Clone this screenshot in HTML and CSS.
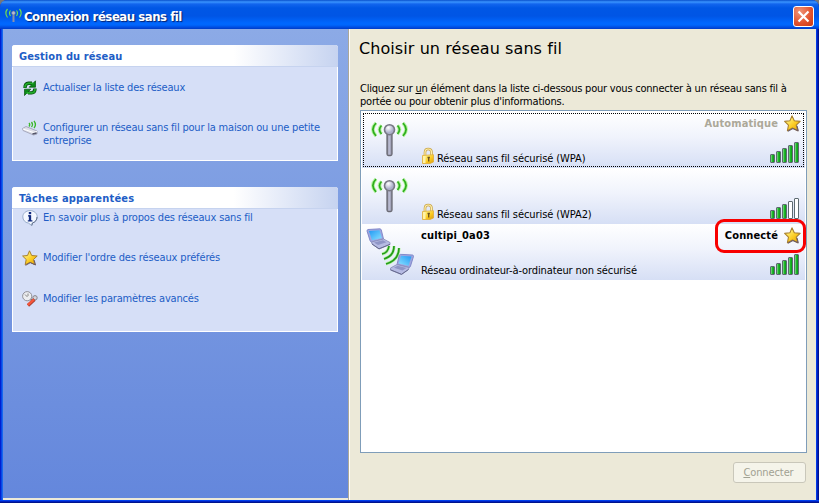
FILE: index.html
```html
<!DOCTYPE html>
<html lang="fr">
<head>
<meta charset="utf-8">
<title>Connexion réseau sans fil</title>
<link rel="stylesheet" href="styles.css">
</head>
<body>
<svg class="defs" aria-hidden="true">
  <defs>
    <linearGradient id="gold" x1="0" y1="0" x2="1" y2="1"><stop offset=".2" stop-color="#fff27a"/><stop offset=".6" stop-color="#fbc91f"/><stop offset="1" stop-color="#d99a10"/></linearGradient>
    <linearGradient id="pole" x1="0" x2="1" y1="0" y2="0"><stop offset="0" stop-color="#74747e"/><stop offset=".4" stop-color="#c0c2da"/><stop offset="1" stop-color="#8a8a9c"/></linearGradient>
    <radialGradient id="ball" cx=".38" cy=".3"><stop offset="0" stop-color="#fff"/><stop offset="1" stop-color="#adb0cb"/></radialGradient>
    <linearGradient id="screen" x1="0" y1="0" x2="1" y2="1"><stop offset="0" stop-color="#2098f5"/><stop offset="1" stop-color="#8be2ff"/></linearGradient>
    <symbol id="star" viewBox="0 0 16 16"><path d="M7.500 .8 9.700 5.500 15.200 6 11.500 9.500 13 14.800 8 12.200 3.200 14.800 4.200 9.500.6 6 5.500 5.500Z" fill="url(#gold)" stroke="#a87f2c" stroke-width="1" stroke-linejoin="round"/><path d="M13.700 15 8.300 12.700 3.600 15.300M12.200 10.200l1.300 4.800" fill="none" stroke="#6b5a65" stroke-width="1"/></symbol>
    <symbol id="lock" viewBox="0 0 14 18"><path d="M4 9V5.200Q4.100 2 7.200 2T10.500 5V9" fill="none" stroke="#c9a447" stroke-width="2.600"/><path d="M4 9V5.200Q4.100 2 7.200 2T10.500 5V9" fill="none" stroke="#fff0ac" stroke-width="1.200"/><path d="M1.500 8.500 12.500 7.700V15L9 16.500H1.500Z" fill="url(#gold)" stroke="#dfad3b" stroke-width=".8"/><path d="M2 9v7h2.500V9Z" fill="#fff3a8"/><path d="M7.700 10v4.500M6.500 10.500h2.400" stroke="#6b5020" stroke-width="1.300"/></symbol>
    <symbol id="antenna" viewBox="0 0 38 38">
      <g fill="none" stroke="#b9f5a4" stroke-width="3.600"><path d="M5 2Q-1.200 8.500 5 15M10.500 4.500Q6.500 8.500 10.500 13M32 2Q38.200 8.500 32 15M26.500 4.500Q30.500 8.500 26.500 13"/></g>
      <g fill="none" stroke="#2fae1f" stroke-width="1.700"><path d="M5 2Q-1.200 8.500 5 15M10.500 4.500Q6.500 8.500 10.500 13M32 2Q38.200 8.500 32 15M26.500 4.500Q30.500 8.500 26.500 13"/></g>
      <rect x="16" y="12" width="5" height="22.500" rx="1.500" fill="url(#pole)" stroke="#6a6a74" stroke-width="1.300"/><circle cx="18.500" cy="8.700" r="5" fill="url(#ball)" stroke="#787884" stroke-width="1.600"/>
    </symbol>
    <symbol id="laptop" viewBox="0 0 28 22"><path d="M2 1.500 14 .8Q15 1 15.300 2L17.500 11 5.500 14Q4.500 14 4 12.500L1 3Q1 1.600 2 1.500Z" fill="#9ea6df" stroke="#7a82c6" stroke-width=".9"/><path d="M3 3 13.500 2.200 15.800 10 6 12.200Z" fill="url(#screen)"/><path d="M5.500 14 17.500 11 24 14.500V16.500L13 21 6 16Z" fill="#b6bbe3" stroke="#8c90bb" stroke-width=".9"/><path d="M8 14.500 17 12.300 20.500 14.200 12 17Z" fill="#8f95c6"/><path d="M6 16 13 20.800 24 16.300" fill="none" stroke="#666a8c"/></symbol>
  </defs>
</svg>

<div class="window">
  <header class="titlebar">
    <svg class="title-icon" viewBox="0 0 17 16"><g fill="none" stroke="#6fdf50" stroke-width="1.200"><path d="M2.500 1Q-.8 5 2.500 9.500M5.500 2.500Q3.500 5 5.500 8M14.500 1Q17.800 5 14.500 9.500M11.500 2.500Q13.500 5 11.500 8"/></g><path d="M8.500 6V14" stroke="#8c92ab" stroke-width="2"/><circle cx="8.500" cy="5" r="1.900" fill="#b6bdd8" stroke="#6b7190" stroke-width=".7"/></svg>
    <h1 class="title">Connexion réseau sans fil</h1>
    <button class="close" aria-label="Fermer"><svg viewBox="0 0 21 21"><path d="M5 5 16 16M16 5 5 16" stroke="#fff" stroke-width="2.400" fill="none"/></svg></button>
  </header>

  <div class="body">
    <aside class="sidebar">
      <section class="panel manage">
        <h2 class="panel-title t-manage">Gestion du réseau</h2>
        <ul class="tasks">
          <li class="task"><svg class="task-icon" viewBox="0 0 16 16"><g fill="none" stroke="#07520d" stroke-width="3.400"><path d="M3 8Q3 3.500 6.500 3.300H10"/><path d="M13 8.500Q13 12.700 9.500 12.900H6"/></g><path d="M13.500.8V7.200H7.200ZM2.500 15.500V9.200H8.800Z" fill="#0b8a18" stroke="#07520d" stroke-width=".7"/><g fill="none" stroke="#22ac2b" stroke-width="1.800"><path d="M3 7.500Q3 3.500 6.500 3.300H11.500"/><path d="M13 9Q13 12.700 9.500 12.900H4.500"/></g></svg><a class="t1">Actualiser la liste des réseaux</a></li>
          <li class="task"><svg class="task-icon" viewBox="0 0 16 16"><path d="M.5 8.500 4 6.500 15 11V14L11.500 15 1 10.500Z" fill="#dedfe9" stroke="#9a9cb0" stroke-width=".8"/><path d="M1 9 11.500 12.500 15 11.500" fill="none" stroke="#fff"/><path d="M10.500 14 14.500 13" stroke="#54556a" stroke-width="1.500"/><path d="M7 3Q8.500 4.500 7 6.500M9.500 2Q11.500 4.500 9.500 7M12 .8Q14.800 4.500 12 8" fill="none" stroke="#3cb82b" stroke-width="1.300"/></svg><a><span class="t2">Configurer un réseau sans fil pour la maison ou une petite</span><br><span class="t2">entreprise</span></a></li>
        </ul>
      </section>
      <section class="panel related">
        <h2 class="panel-title t-related">Tâches apparentées</h2>
        <ul class="tasks">
          <li class="task"><svg class="task-icon" viewBox="0 0 16 16"><path d="M8 .6C12.200.6 15.200 3.500 15.200 6.800 15.200 9.800 13 12.200 10.400 13L9.800 15.600 6.500 13.100C3 12.700.8 9.900.8 6.800.8 3.500 3.800.6 8 .6Z" fill="#f4f8ff" stroke="#8fa5c4" stroke-width=".9"/><path d="M9.800 15.400 10.400 13Q15 11.500 15 7" fill="none" stroke="#60708a"/><rect x="6.800" y="2" width="2.400" height="2.200" fill="#132c80"/><path d="M6 5.800H8V10.500M5.800 10.800H10.400" stroke="#132c80" stroke-width="1.200" fill="none"/><path d="M8 5.200V11" stroke="#132c80" stroke-width="2.300"/></svg><a class="t3">En savoir plus à propos des réseaux sans fil</a></li>
          <li class="task"><svg class="task-icon"><use href="#star"/></svg><a class="t4">Modifier l'ordre des réseaux préférés</a></li>
          <li class="task last"><svg class="task-icon" viewBox="0 0 16 16"><path d="M8 8 11 10" stroke="#777" stroke-width="2"/><circle cx="5.200" cy="5.200" r="4.600" fill="#ecedf0" stroke="#909098"/><path d="M3 3.500 5.500 6M6 2.500V5" stroke="#888" stroke-width="1"/><circle cx="13" cy="6.800" r="2.200" fill="#d5d5dc" stroke="#85858d"/><path d="M6 14.500 12.500 8.500" stroke="#a23d30" stroke-width="3.200"/><path d="M5.800 14 12 8.300" stroke="#f5563c" stroke-width="2.400"/></svg><a class="t5">Modifier les paramètres avancés</a></li>
        </ul>
      </section>
    </aside>

    <main class="content">
      <h2 class="heading">Choisir un réseau sans fil</h2>
      <p class="intro"><span class="i1">Cliquez sur <u>u</u>n élément dans la liste ci-dessous pour vous connecter à un réseau sans fil à</span><br><span class="i2">portée ou pour obtenir plus d'informations.</span></p>
      <div class="list">
        <div class="network selected">
          <svg class="antenna"><use href="#antenna"/></svg>
          <div class="info"><b class="name"></b><div class="kind"><svg class="lock"><use href="#lock"/></svg><span class="k1">Réseau sans fil sécurisé (WPA)</span></div></div>
          <div class="state"><div class="status"><span class="auto">Automatique</span><svg class="star"><use href="#star"/></svg></div><div class="bars"><i class="h1"></i><i class="h2"></i><i class="h3"></i><i class="h4"></i><i class="h5"></i></div></div>
        </div>
        <div class="network">
          <svg class="antenna"><use href="#antenna"/></svg>
          <div class="info"><b class="name"></b><div class="kind"><svg class="lock"><use href="#lock"/></svg><span class="k1">Réseau sans fil sécurisé (WPA2)</span></div></div>
          <div class="state"><div class="status"></div><div class="bars"><i class="h1"></i><i class="h2"></i><i class="h3"></i><i class="h4 off"></i><i class="h5 off"></i></div></div>
        </div>
        <div class="network">
          <svg class="adhoc" viewBox="0 0 50 50"><g fill="none" stroke="#b6f3a2" stroke-width="3"><path d="M16 27Q22 26 23 19M18 32Q28 29 28 19M20 37Q33 33 33 21"/></g><g fill="none" stroke="#249b1a" stroke-width="1.700"><path d="M16 27Q22 26 23 19M18 32Q28 29 28 19M20 37Q33 33 33 21"/></g><use href="#laptop" x="0" y="1" width="28" height="22"/><use href="#laptop" x="0" y="0" width="28" height="22" transform="matrix(-1 0 0 1 48.500 26.500)"/></svg>
          <div class="info"><b class="name">cultipi_0a03</b><div class="kind"><span class="k3">Réseau ordinateur-à-ordinateur non sécurisé</span></div></div>
          <div class="state"><div class="status"><span class="connected">Connecté</span><svg class="star"><use href="#star"/></svg></div><div class="bars"><i class="h1"></i><i class="h2"></i><i class="h3"></i><i class="h4"></i><i class="h5"></i></div></div>
          <div class="highlight"></div>
        </div>
      </div>
      <button class="connect" disabled><u>C</u>onnecter</button>
    </main>
  </div>
</div>
</body>
</html>
```
FILE: styles.css
```css
* { box-sizing: border-box; }
body { margin: 0; background: #777; font: 11px/13px "DejaVu Sans Condensed", "DejaVu Sans", sans-serif; font-stretch: condensed; color: #000; white-space: nowrap; overflow: hidden; }
h1, h2, p, ul { margin: 0; padding: 0; font-weight: normal; }
ul { list-style: none; }
svg { display: block; flex: none; }
u { text-underline-offset: 1px; text-decoration-thickness: 1px; }
.defs { position: absolute; width: 0; height: 0; }

.window { width: 819px; height: 503px; padding: 0 3px 3px; border-radius: 7px 7px 0 0; overflow: hidden; display: flex; flex-direction: column;
  background: linear-gradient(90deg, #0020d0 0 1px, #0845e8 1px 2px, #1668ee 2px 3px, #0831d9 3px 816px, #0038e8 816px 817px, #0020b8 817px 818px, #00108c 818px); }
.window::after { content: ""; height: 3px; margin: 0 -3px -3px; background: linear-gradient(#0040ed 0 1px, #0020c0 1px 2px, #00138c 2px); }
.titlebar { height: 29px; margin: 0 -3px; padding: 0 5px 0 5px; display: flex; align-items: center; flex: none;
  background: linear-gradient(#0850cc 0, #3994ff 2px, #1265ee 4px, #0057e5 8px, #0055e5 16px, #0067fe 23px, #0066fc 25px, #0045d8 28px, #003cc4 29px); }
.title-icon { width: 17px; height: 16px; margin-top: 2px; }
.title { font-size: 13px; line-height: 16px; font-weight: bold; color: #fff; text-shadow: 1px 1px 1px #06216b; margin: 4px auto 0 2px; letter-spacing: -.46px; }
.close { width: 21px; height: 21px; margin: 3px 0 0; padding: 0; border: 1px solid #fff; border-radius: 3px; background: radial-gradient(circle at 30% 25%, #ef9478, #e2502b 60%, #c93a14); }
.close svg { width: 19px; height: 19px; }

.body { flex: 1; display: flex; min-height: 0; background: #ece9d8; }
.sidebar { width: 345px; margin-bottom: 2px; padding: 16px 10px 0 9px; display: flex; flex-direction: column; gap: 26px; background: linear-gradient(#8caae6, #6487dc); }
.panel { background: #d6dff7; border: 1px solid #fff; border-top: 0; border-radius: 3px 3px 0 0; color: #215dc6; }
.manage { height: 116px; }
.related { height: 145px; }
.panel-title { height: 22px; margin: 0 -1px; padding: 5px 0 0 7px; border-radius: 3px 3px 0 0; font-size: 11px; line-height: 13px; font-weight: bold; background: linear-gradient(90deg, #fff 68%, #c6d3f0); border-bottom: 1px solid #c6d3ef; }
.t-manage { letter-spacing: .1px; }
.t-related { letter-spacing: .2px; }
.tasks { display: flex; flex-direction: column; }
.task { display: flex; gap: 5px; padding-left: 9px; height: 40px; letter-spacing: -.19px; }
.task-icon { width: 16px; height: 16px; margin-top: -1px; }
.manage .tasks { padding-top: 14px; }
.related .tasks { padding-top: 2px; }
.related .last { padding-top: 1px; }
.t2 { letter-spacing: -.2px; }
.t3 { letter-spacing: -.15px; }
.t4 { letter-spacing: -.13px; }

.content { flex: 1; border-left: 1px solid #aca899; box-shadow: inset 1px 0 #fff; padding: 10px 9px 0 11px; display: flex; flex-direction: column; }
.heading { font-family: "DejaVu Sans", sans-serif; font-stretch: normal; font-size: 16px; line-height: 20px; letter-spacing: .08px; margin: 0 0 23px -1px; }
.intro { height: 28px; }
.i1 { letter-spacing: -.215px; }
.i2 { letter-spacing: -.21px; }
.list { width: 447px; height: 343px; padding: 1px; border: 1px solid #7f9db9; background: #fff; flex: none; }
.network { position: relative; display: flex; width: 443px; height: 56px; background: linear-gradient(#fff, #f0f3fc 45%, #d6dff5); }
.selected { outline: 1px dotted #000; outline-offset: -2px; }
.antenna { width: 38px; height: 38px; margin: 9px 12px 0 9px; }
.adhoc { width: 50px; height: 50px; margin: 3px 5px 0 4px; }
.info { flex: 1; padding: 5px 0 3px; display: flex; flex-direction: column; justify-content: space-between; }
.name { letter-spacing: .15px; }
.kind { display: flex; align-items: flex-end; height: 18px; gap: 2px; }
.kind .lock { width: 14px; height: 18px; }
.k1 { letter-spacing: -.08px; }
.k3 { letter-spacing: -.12px; }
.state { width: 120px; padding: 3px 4px 5px 0; display: flex; flex-direction: column; justify-content: space-between; align-items: flex-end; }
.status { display: flex; align-items: center; gap: 6px; height: 17px; font-weight: bold; letter-spacing: .12px; }
.star { width: 17px; height: 17px; }
.auto { color: #aca899; }
.bars { display: flex; align-items: flex-end; gap: 1px; margin-right: 2px; }
.bars i { width: 5px; border: 1px solid #5d6a70; border-radius: 1px; background: linear-gradient(90deg, #86dc8c, #20b52c 50%, #079a12); }
.bars .off { background: #fff; }
.bars .h1 { height: 9px; }
.bars .h2 { height: 12px; }
.bars .h3 { height: 15px; }
.bars .h4 { height: 18px; }
.bars .h5 { height: 21px; }
.highlight { position: absolute; left: 353px; top: -5px; width: 91px; height: 34px; border: 3px solid #f80000; border-radius: 9px; }
.connect { width: 73px; height: 21px; margin: 9px 1px 0 auto; padding: 0 2px 0 0; border: 1px solid #c9c7ba; border-radius: 3px; background: #f5f4ea; color: #a1a192; font: inherit; letter-spacing: -.1px; }
```
